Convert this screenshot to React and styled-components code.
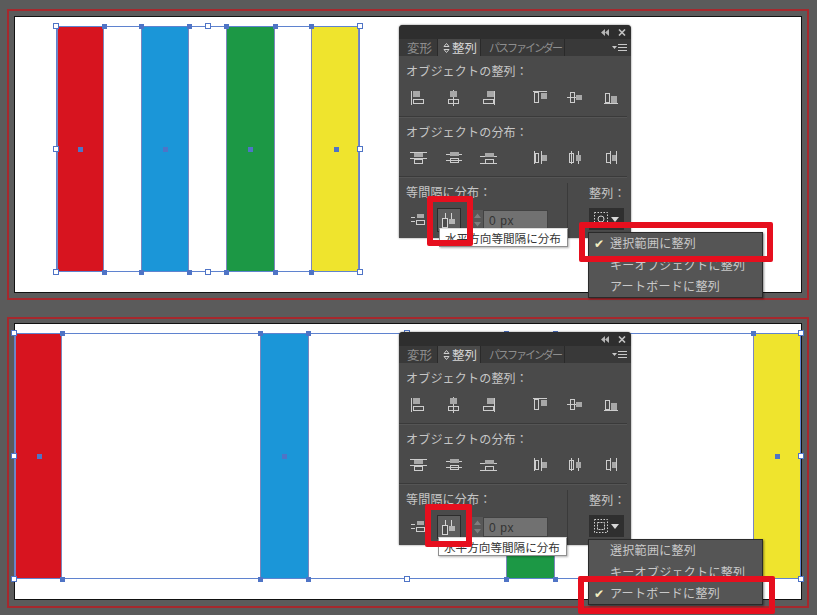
import styled, { createGlobalStyle } from "styled-components";

const Global = createGlobalStyle`
  html, body { margin: 0; padding: 0; background: #5b5b5b; }
  body { font-family: "Noto Sans CJK JP", "Liberation Sans", sans-serif; }
`;

const Page = styled.div`
  width: 817px;
  height: 615px;
  overflow: hidden;
  padding-top: 9px;
  box-sizing: border-box;
`;

const Frame = styled.div`
  position: relative;
  box-sizing: border-box;
  width: 802px;
  height: 291px;
  margin-left: 7px;
  margin-bottom: 17px;
  padding: ${(p) => p.$padTop}px 5px 5px 5px;
  border: 2px solid #a6282d;
`;

const Artboard = styled.div`
  position: relative;
  box-sizing: border-box;
  width: 788px;
  height: 277px;
  background: #fff;
  border: 1px solid #111;
`;

const Bar = styled.div`
  position: absolute;
  box-sizing: border-box;
  left: ${(p) => p.$x}px;
  top: ${(p) => p.$y}px;
  width: ${(p) => p.$w}px;
  height: ${(p) => p.$h}px;
  background: ${(p) => p.$color};
  border: 1px solid #7b86bd;
`;

const Selection = styled.div`
  position: absolute;
  box-sizing: border-box;
  left: ${(p) => p.$x}px;
  top: ${(p) => p.$y}px;
  width: ${(p) => p.$w}px;
  height: ${(p) => p.$h}px;
  border: 1px solid #5f83cf;
`;

const Handle = styled.div`
  position: absolute;
  box-sizing: border-box;
  left: ${(p) => p.$x - (p.$white ? 3 : 2)}px;
  top: ${(p) => p.$y - (p.$white ? 3 : 2)}px;
  width: ${(p) => (p.$white ? 6 : 5)}px;
  height: ${(p) => (p.$white ? 6 : 5)}px;
  background: ${(p) => (p.$white ? "#fff" : "#4f74c6")};
  border: 1px solid #4f74c6;
`;

const Panel = styled.div`
  position: absolute;
  left: ${(p) => p.$x}px;
  top: ${(p) => p.$y}px;
  width: 232px;
  height: 213px;
  display: flex;
  flex-direction: column;
  background: #4a4a4a;
  border-radius: 4px 4px 0 0;
  box-shadow: 0 0 2px rgba(0, 0, 0, 0.6);
  color: #c6c6c6;
  font-size: 12px;
  overflow: hidden;
`;

const TitleBar = styled.div`
  height: 14px;
  flex: none;
  background: #2e2e2e;
  display: flex;
  align-items: center;
  justify-content: flex-end;
  gap: 9px;
  padding-right: 5px;
`;

const Tabs = styled.div`
  height: 17px;
  flex: none;
  display: flex;
  align-items: stretch;
  background: #393939;
`;

const Tab = styled.div`
  box-sizing: border-box;
  width: ${(p) => p.$w}px;
  padding-left: ${(p) => p.$pad}px;
  display: flex;
  align-items: center;
  gap: 2px;
  line-height: 17px;
  font-size: 12.5px;
  white-space: nowrap;
  color: ${(p) => (p.$active ? "#d6d6d6" : "#8e8e8e")};
  background: ${(p) => (p.$active ? "#4a4a4a" : "transparent")};
  border-right: 1px solid #2a2a2a;
`;

const NarrowText = styled.span`
  font-size: 11px;
  letter-spacing: -2px;
`;

const TabMenu = styled.div`
  margin-left: auto;
  margin-right: 3px;
  display: flex;
  align-items: center;
`;

const Section = styled.div`
  box-sizing: border-box;
  height: ${(p) => p.$h}px;
  flex: none;
  padding: 6px 0 0 7px;
  border-bottom: 1px solid #3a3a3a;
  box-shadow: 0 1px 0 #555;
  margin: 0 4px 0 0;
`;

const Label = styled.div`
  height: 18px;
  line-height: 18px;
  letter-spacing: 0.2px;
  white-space: nowrap;
`;

const IconRow = styled.div`
  display: flex;
  align-items: center;
  gap: 15.6px;
  margin-top: ${(p) => p.$top}px;
  margin-left: 2px;
`;

const IconCell = styled.svg`
  width: 20px;
  height: 16px;
  flex: none;
  margin-left: ${(p) => (p.$wide ? 15 : 0)}px;
`;

const Bottom = styled.div`
  flex: 1;
  display: flex;
  min-height: 0;
`;

const SpacingColumn = styled.div`
  box-sizing: border-box;
  width: 168px;
  padding: 6px 0 0 7px;
`;

const SpacingRow = styled.div`
  display: flex;
  align-items: center;
  margin: 7px 0 0 2px;
`;

const ActiveButton = styled.div`
  box-sizing: border-box;
  width: 24px;
  height: 24px;
  margin-left: 9px;
  display: flex;
  align-items: center;
  justify-content: center;
  background: #5e5e5e;
  border: 1px solid #2c2c2c;
`;

const Spinner = styled.div`
  width: 11px;
  height: 20px;
  margin-left: 11px;
  background: #585858;
  display: flex;
  align-items: center;
  justify-content: center;
`;

const ValueBox = styled.div`
  box-sizing: border-box;
  width: 65px;
  height: 20px;
  line-height: 20px;
  padding-left: 5px;
  background: #717171;
  color: #333;
  font-family: "Liberation Sans", sans-serif;
  font-size: 12px;
  letter-spacing: 0.6px;
  border: 1px solid #424242;
`;

const AlignColumn = styled.div`
  box-sizing: border-box;
  flex: 1;
  margin-top: 6px;
  padding: 1px 0 0 21px;
  border-left: 1px solid #3a3a3a;
`;

const AlignToButton = styled.div`
  box-sizing: border-box;
  width: 35px;
  height: 22px;
  margin: 6px 0 0 0;
  display: flex;
  align-items: center;
  justify-content: center;
  background: #2f2f2f;
`;

const Tooltip = styled.div`
  position: absolute;
  box-sizing: border-box;
  left: ${(p) => p.$x}px;
  top: ${(p) => p.$y}px;
  width: 129px;
  height: 19px;
  line-height: 18px;
  padding-left: 5px;
  background: #fff;
  border: 1px solid #8f8f8f;
  border-top-color: #ddd;
  box-shadow: 1px 1px 2px rgba(0, 0, 0, 0.3);
  color: #333;
  font-size: 11.6px;
  white-space: nowrap;
`;

const Menu = styled.div`
  position: absolute;
  box-sizing: border-box;
  left: ${(p) => p.$x}px;
  top: ${(p) => p.$y}px;
  width: 175px;
  height: 66px;
  background: #555;
  border: 1px solid #2a2a2a;
  box-shadow: 1px 1px 2px rgba(0, 0, 0, 0.45);
  color: #c9c9c9;
  font-size: 12px;
  letter-spacing: 0.3px;
`;

const MenuRow = styled.div`
  box-sizing: border-box;
  display: flex;
  align-items: center;
  height: 21.4px;
  padding-bottom: 2px;
  white-space: nowrap;
`;

const Check = styled.span`
  width: 21px;
  flex: none;
  padding-left: 5px;
  box-sizing: border-box;
  color: #f4eec0;
  font-size: 12px;
`;

const Callout = styled.div`
  position: absolute;
  box-sizing: border-box;
  left: ${(p) => p.$x}px;
  top: ${(p) => p.$y}px;
  width: ${(p) => p.$w}px;
  height: ${(p) => p.$h}px;
  border: 6px solid #e60f1e;
  border-radius: 2px;
  pointer-events: none;
`;

const LINE = "#cdcdcd";
const FILL = "#a8a8a8";

// one align/distribute glyph: [x1,y1,x2,y2] lines, plus [x,y,w,h] boxes and solids
function Glyph({ lines = [], boxes = [], solids = [], wide }) {
  return (
    <IconCell viewBox="0 0 20 16" $wide={wide} shapeRendering="crispEdges">
      {lines.map(([a, b, c, d], i) => (
        <line key={i} x1={a} y1={b} x2={c} y2={d} stroke={LINE} />
      ))}
      {boxes.map(([x, y, w, h], i) => (
        <rect key={i} x={x + 0.5} y={y + 0.5} width={w - 1} height={h - 1} fill="none" stroke={LINE} />
      ))}
      {solids.map(([x, y, w, h], i) => (
        <rect key={i} x={x} y={y} width={w} height={h} fill={FILL} />
      ))}
    </IconCell>
  );
}

const alignIcons = [
  { lines: [[3.5, 1, 3.5, 15]], solids: [[5, 1, 7, 6]], boxes: [[5, 9, 11, 5]] },
  { lines: [[9.5, 0, 9.5, 16]], solids: [[6, 1, 7, 6]], boxes: [[4, 9, 11, 5]] },
  { lines: [[15.5, 1, 15.5, 15]], solids: [[8, 1, 7, 6]], boxes: [[4, 9, 11, 5]] },
  { wide: true, lines: [[3, 1.5, 17, 1.5]], boxes: [[4, 2, 5, 11]], solids: [[11, 3, 6, 6]] },
  { lines: [[2, 7.5, 17, 7.5]], boxes: [[5, 2, 5, 11]], solids: [[11, 5, 6, 5]] },
  { lines: [[3, 13.5, 17, 13.5]], boxes: [[4, 3, 5, 10]], solids: [[10, 6, 6, 7]] },
];

const distributeIcons = [
  { lines: [[2, 3.5, 19, 3.5], [2, 9.5, 19, 9.5]], solids: [[6, 4, 9, 4]], boxes: [[6, 10, 9, 5]] },
  { lines: [[2, 5.5, 18, 5.5], [2, 11.5, 18, 11.5]], solids: [[6, 3, 9, 4]], boxes: [[6, 9, 9, 5]] },
  { lines: [[1, 7.5, 18, 7.5], [1, 14.5, 18, 14.5]], solids: [[6, 4, 9, 4]], boxes: [[6, 10, 9, 5]] },
  { wide: true, lines: [[4.5, 2, 4.5, 15], [11.5, 2, 11.5, 15]], boxes: [[5, 4, 4, 10]], solids: [[12, 6, 5, 6]] },
  { lines: [[6.5, 2, 6.5, 15], [13.5, 2, 13.5, 15]], boxes: [[4, 4, 5, 10]], solids: [[11, 6, 5, 6]] },
  { lines: [[9.5, 2, 9.5, 15], [15.5, 2, 15.5, 15]], boxes: [[5, 4, 5, 10]], solids: [[11, 6, 4, 6]] },
];

function PanelChrome() {
  return (
    <TitleBar>
      <svg width="8" height="7" viewBox="0 0 8 7">
        <path d="M4 0v7L0 3.5zM8 0v7L4 3.5z" fill="#b5b5b5" />
      </svg>
      <svg width="8" height="7" viewBox="0 0 8 7">
        <path d="M1 0.5l6 6M7 0.5l-6 6" stroke="#c2c2c2" strokeWidth="1.6" fill="none" />
      </svg>
    </TitleBar>
  );
}

function PanelTabs() {
  return (
    <Tabs>
      <Tab $w={39} $pad={8}>変形</Tab>
      <Tab $w={43} $pad={5} $active>
        <svg width="7" height="10" viewBox="0 0 7 10">
          <path d="M3.5 0.5L6 3.5H1zM3.5 9.5L1 6.5H6z" fill="none" stroke="#cfcfcf" />
        </svg>
        整列
      </Tab>
      <Tab $w={84} $pad={8}><NarrowText>パスファインダー</NarrowText></Tab>
      <TabMenu>
        <svg width="16" height="9" viewBox="0 0 16 9">
          <path d="M0 3h5L2.5 6z" fill="#c8c8c8" />
          <path d="M6 1.5h9M6 4.5h9M6 7.5h9" stroke="#c8c8c8" />
        </svg>
      </TabMenu>
    </Tabs>
  );
}

function AlignToIcon({ mode }) {
  return (
    <svg width="30" height="16" viewBox="0 0 30 16">
      <rect x="2.5" y="1.5" width="13" height="13" fill="none" stroke="#d0d0d0" strokeDasharray="1.5 1.5" />
      {mode === "selection" ? (
        <circle cx="9" cy="8" r="3" fill="none" stroke="#d0d0d0" />
      ) : (
        <rect x="5.5" y="4.5" width="7" height="7" fill="none" stroke="#d0d0d0" strokeDasharray="2 1" />
      )}
      <path d="M19 6h8l-4 5z" fill="#d8d8d8" />
    </svg>
  );
}

function AlignPanel({ x, y, mode }) {
  return (
    <Panel $x={x} $y={y}>
      <PanelChrome />
      <PanelTabs />
      <Section $h={61}>
        <Label>オブジェクトの整列：</Label>
        <IconRow $top={10}>
          {alignIcons.map((icon, i) => <Glyph key={i} {...icon} />)}
        </IconRow>
      </Section>
      <Section $h={60}>
        <Label>オブジェクトの分布：</Label>
        <IconRow $top={8}>
          {distributeIcons.map((icon, i) => <Glyph key={i} {...icon} />)}
        </IconRow>
      </Section>
      <Bottom>
        <SpacingColumn>
          <Label>等間隔に分布：</Label>
          <SpacingRow>
            <Glyph
              lines={[[3, 5.5, 7, 5.5], [3, 9.5, 7, 9.5]]}
              solids={[[9, 2, 7, 4]]}
              boxes={[[8, 8, 9, 5]]}
            />
            <ActiveButton>
              <svg width="18" height="18" viewBox="0 0 18 18" shapeRendering="crispEdges">
                <path d="M5.5 1.5v6M11.5 1.5v6" stroke="#d4d4d4" fill="none" />
                <rect x="2.5" y="7.5" width="5" height="9" fill="#4c4c4c" stroke="#d4d4d4" />
                <rect x="9" y="8" width="6" height="5" fill="#b5b5b5" />
              </svg>
            </ActiveButton>
            <Spinner>
              <svg width="9" height="16" viewBox="0 0 9 16">
                <path d="M4.5 1.5L8 6H1zM4.5 14.5L1 10h7z" fill="#7e7e7e" />
              </svg>
            </Spinner>
            <ValueBox>0 px</ValueBox>
          </SpacingRow>
        </SpacingColumn>
        <AlignColumn>
          <Label>整列：</Label>
          <AlignToButton>
            <AlignToIcon mode={mode} />
          </AlignToButton>
        </AlignColumn>
      </Bottom>
    </Panel>
  );
}

function Objects({ bars, selection, white, blue, centers }) {
  return (
    <>
      {bars.map((b) => (
        <Bar key={b.color} $x={b.x} $y={selection.y} $w={b.w} $h={selection.h} $color={b.color} />
      ))}
      <Selection $x={selection.x} $y={selection.y} $w={selection.w} $h={selection.h} />
      {blue.map((x) => (
        <span key={x}>
          <Handle $x={x} $y={selection.y} />
          <Handle $x={x} $y={selection.y + selection.h} />
        </span>
      ))}
      {centers.map((x) => (
        <Handle key={x} $x={x} $y={selection.y + selection.h / 2} />
      ))}
      {white.map(([x, y], i) => (
        <Handle key={i} $white $x={x} $y={y} />
      ))}
    </>
  );
}

const RED = "#d7141f";
const BLUE = "#1b96d8";
const GREEN = "#1c9845";
const YELLOW = "#efe42d";

function App() {
  return (
    <Page>
      <Global />

      <Frame $padTop={5}>
        <Artboard>
          <Objects
            bars={[
              { x: 42, w: 47, color: RED },
              { x: 126, w: 48, color: BLUE },
              { x: 211, w: 49, color: GREEN },
              { x: 296, w: 48, color: YELLOW },
            ]}
            selection={{ x: 41, y: 9, w: 304, h: 246 }}
            blue={[89, 126, 174, 211, 260, 296]}
            centers={[65, 150, 235, 321]}
            white={[[41, 9], [193, 9], [345, 9], [41, 132], [345, 132], [41, 255], [193, 255], [345, 255]]}
          />
        </Artboard>
        <AlignPanel x={390} y={14} mode="selection" />
        <Tooltip $x={430} $y={217}>水平方向等間隔に分布</Tooltip>
        <Menu $x={579} $y={221}>
          <MenuRow><Check>✔</Check>選択範囲に整列</MenuRow>
          <MenuRow><Check />キーオブジェクトに整列</MenuRow>
          <MenuRow><Check />アートボードに整列</MenuRow>
        </Menu>
        <Callout $x={418} $y={185} $w={46} $h={50} />
        <Callout $x={570} $y={211} $w={194} $h={40} />
      </Frame>

      <Frame $padTop={4}>
        <Artboard>
          <Objects
            bars={[
              { x: 0, w: 47, color: RED },
              { x: 245, w: 49, color: BLUE },
              { x: 491, w: 49, color: GREEN },
              { x: 738, w: 48, color: YELLOW },
            ]}
            selection={{ x: -1, y: 9, w: 787, h: 246 }}
            blue={[47, 245, 293, 491, 540, 738]}
            centers={[24, 269, 762]}
            white={[[-1, 9], [392, 9], [786, 9], [-1, 132], [786, 132], [-1, 255], [392, 255], [786, 255]]}
          />
        </Artboard>
        <AlignPanel x={390} y={13} mode="artboard" />
        <Tooltip $x={429} $y={218}>水平方向等間隔に分布</Tooltip>
        <Menu $x={579} $y={220}>
          <MenuRow><Check />選択範囲に整列</MenuRow>
          <MenuRow><Check />キーオブジェクトに整列</MenuRow>
          <MenuRow><Check>✔</Check>アートボードに整列</MenuRow>
        </Menu>
        <Callout $x={416} $y={185} $w={47} $h={43} />
        <Callout $x={569} $y={257} $w={197} $h={38} />
      </Frame>
    </Page>
  );
}

export default App;
